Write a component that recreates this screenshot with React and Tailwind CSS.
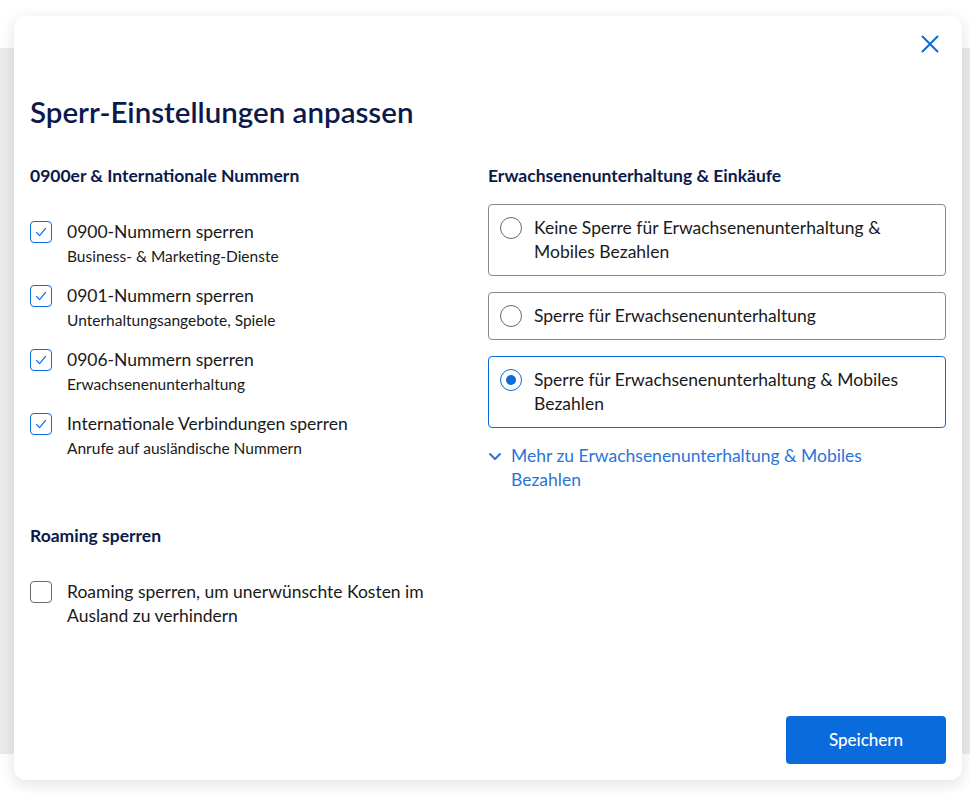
import { useState } from 'react'

const font = { fontFamily: 'Lato, "Noto Sans", sans-serif' }

const blocks = [
  { id: '0900', label: '0900-Nummern sperren', hint: 'Business- & Marketing-Dienste' },
  { id: '0901', label: '0901-Nummern sperren', hint: 'Unterhaltungsangebote, Spiele' },
  { id: '0906', label: '0906-Nummern sperren', hint: 'Erwachsenenunterhaltung' },
  { id: 'intl', label: 'Internationale Verbindungen sperren', hint: 'Anrufe auf ausländische Nummern' },
]

const adultOptions = [
  { value: 'none', label: 'Keine Sperre für Erwachsenenunterhaltung & Mobiles Bezahlen' },
  { value: 'adult', label: 'Sperre für Erwachsenenunterhaltung' },
  { value: 'all', label: 'Sperre für Erwachsenenunterhaltung & Mobiles Bezahlen' },
]

function Checkbox({ checked, onChange }) {
  return (
    <button
      type="button"
      onClick={onChange}
      className={`mt-[1px] flex h-[22px] w-[22px] shrink-0 items-center justify-center rounded-[4px] border bg-white ${
        checked ? 'border-[#0a6cdc]' : 'border-[#6b6b6b]'
      }`}
    >
      {checked ? (
        <svg width="22" height="22" viewBox="0 0 22 22" fill="none">
          <polyline points="6 11.5 9.5 15 16 7" stroke="#0a6cdc" strokeWidth="1.3" strokeLinecap="round" strokeLinejoin="round" />
        </svg>
      ) : null}
    </button>
  )
}

function Radio({ checked }) {
  return (
    <span
      className={`flex h-[22px] w-[22px] shrink-0 items-center justify-center rounded-full border bg-white ${
        checked ? 'border-[#0a6cdc]' : 'border-[#6b6b6b]'
      }`}
    >
      {checked ? <span className="h-[10px] w-[10px] rounded-full bg-[#0a6cdc]" /> : null}
    </span>
  )
}

export default function App() {
  const [checked, setChecked] = useState({ '0900': true, '0901': true, '0906': true, intl: true, roaming: false })
  const [adult, setAdult] = useState('all')

  const toggle = (id) => setChecked((prev) => ({ ...prev, [id]: !prev[id] }))

  return (
    <div className="relative h-[793px] w-full overflow-hidden bg-white" style={font}>
      <div className="absolute left-0 top-[48px] h-[706px] w-full bg-[#ebebeb]" />

      <div className="absolute left-[14px] top-[16px] flex h-[764px] w-[948px] flex-col rounded-[12px] bg-white px-4 pb-4 shadow-[0_4px_16px_rgba(0,0,0,0.12)]">
        <div className="flex justify-end pt-[19px]">
          <button type="button" className="mr-[7px] flex h-[18px] w-[18px] items-center justify-center" aria-label="Schließen">
            <svg width="18" height="18" viewBox="0 0 18 18" fill="none">
              <path d="M1.5 1.5L16.5 16.5M16.5 1.5L1.5 16.5" stroke="#0a6cdc" strokeWidth="2" strokeLinecap="round" />
            </svg>
          </button>
        </div>

        <h1 className="mt-[41px] text-[29.5px] font-semibold leading-[36px] text-[#0b1a4a]">Sperr-Einstellungen anpassen</h1>

        <div className="mt-[34px] grid grid-cols-2">
          <div className="pr-[30px]">
            <h2 className="text-[17.5px] font-bold leading-6 text-[#0b1a4a]">0900er & Internationale Nummern</h2>
            <div className="mt-8 flex flex-col gap-4">
              {blocks.map((item) => (
                <label key={item.id} className="flex cursor-pointer items-start gap-[15px]">
                  <Checkbox checked={checked[item.id]} onChange={() => toggle(item.id)} />
                  <div>
                    <p className="text-[17.5px] leading-6 text-[#1a1a1a]">{item.label}</p>
                    <p className="text-[15.5px] leading-6 text-[#1a1a1a]">{item.hint}</p>
                  </div>
                </label>
              ))}
            </div>

            <h2 className="mt-16 text-[17.5px] font-bold leading-6 text-[#0b1a4a]">Roaming sperren</h2>
            <label className="mt-8 flex cursor-pointer items-start gap-[15px]">
              <Checkbox checked={checked.roaming} onChange={() => toggle('roaming')} />
              <p className="pr-[10px] text-[17.5px] leading-6 text-[#1a1a1a]">
                Roaming sperren, um unerwünschte Kosten im Ausland zu verhindern
              </p>
            </label>
          </div>

          <div>
            <h2 className="text-[17.5px] font-bold leading-6 text-[#0b1a4a]">Erwachsenenunterhaltung & Einkäufe</h2>
            <div className="mt-4 flex flex-col gap-4">
              {adultOptions.map((option) => {
                const isActive = adult === option.value
                return (
                  <button
                    key={option.value}
                    type="button"
                    onClick={() => setAdult(option.value)}
                    className={`flex items-start gap-3 rounded-[4px] border p-[11px] text-left ${
                      isActive ? 'border-[#0a6cdc]' : 'border-[#8a8a8a]'
                    }`}
                  >
                    <span className="mt-[1px]">
                      <Radio checked={isActive} />
                    </span>
                    <span className="pr-6 text-[17.5px] leading-6 text-[#1a1a1a]">{option.label}</span>
                  </button>
                )
              })}
            </div>
            <button type="button" className="mt-4 flex items-start gap-[10px] text-left">
              <svg className="mt-[6px] ml-[1px] shrink-0" width="12" height="12" viewBox="0 0 12 12" fill="none">
                <path d="M1 4L6 9L11 4" stroke="#2b74d9" strokeWidth="2" strokeLinecap="round" strokeLinejoin="round" />
              </svg>
              <span className="max-w-[390px] text-[17.5px] leading-6 text-[#2b74d9]">Mehr zu Erwachsenenunterhaltung & Mobiles Bezahlen</span>
            </button>
          </div>
        </div>

        <div className="mt-auto flex justify-end">
          <button type="button" className="h-12 w-40 rounded-[4px] bg-[#0a6cdc] text-[17px] font-medium text-white">
            Speichern
          </button>
        </div>
      </div>
    </div>
  )
}
